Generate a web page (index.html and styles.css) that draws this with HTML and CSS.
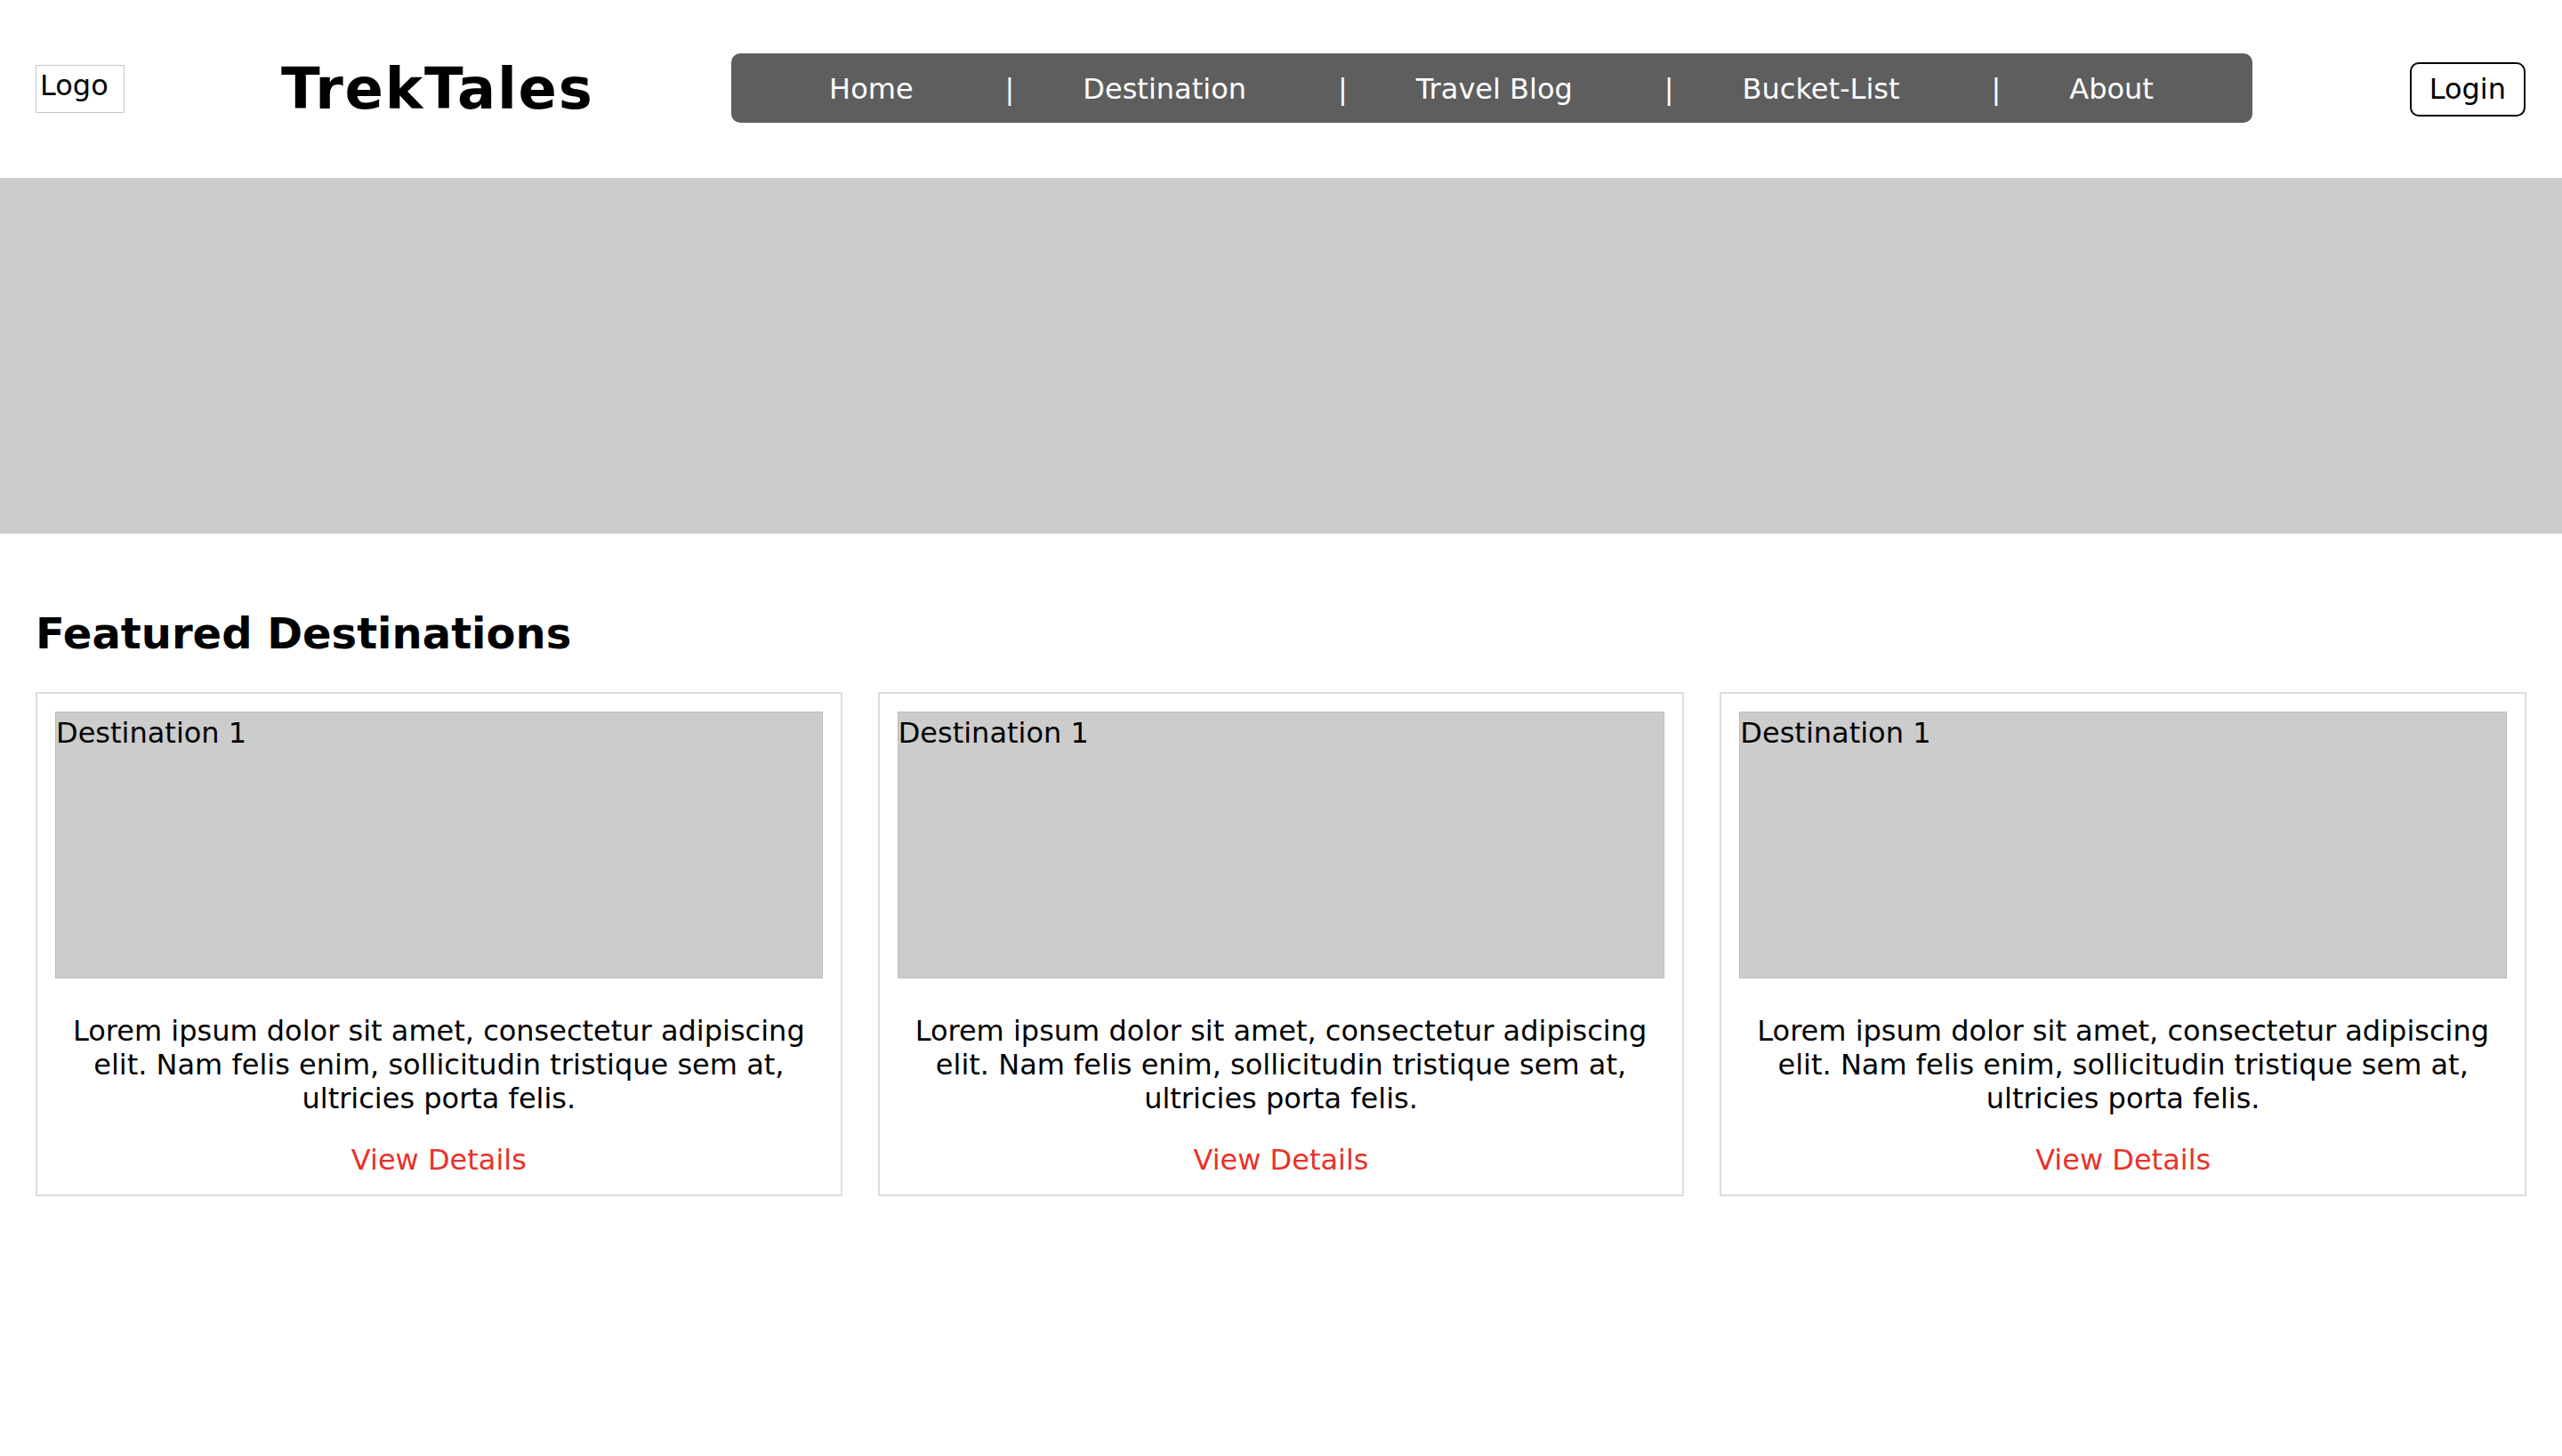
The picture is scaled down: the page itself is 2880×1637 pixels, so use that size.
FILE: index.html
```html
<!DOCTYPE html>
<html lang="en">
<head>
<meta charset="utf-8">
<title>TrekTales</title>
<link rel="stylesheet" href="styles.css">
</head>
<body>
<header class="site-header">
  <div class="logo">Logo</div>
  <h1 class="brand">TrekTales</h1>
  <nav class="main-nav">
    <a href="#">Home</a><span class="sep">|</span>
    <a href="#">Destination</a><span class="sep">|</span>
    <a href="#">Travel Blog</a><span class="sep">|</span>
    <a href="#">Bucket-List</a><span class="sep">|</span>
    <a href="#">About</a>
  </nav>
  <button class="login">Login</button>
</header>
<div class="hero"></div>
<section class="featured">
  <h2>Featured Destinations</h2>
  <div class="cards">
    <div class="card">
      <div class="card-img">Destination 1</div>
      <p>Lorem ipsum dolor sit amet, consectetur adipiscing elit. Nam felis enim, sollicitudin tristique sem at, ultricies porta felis.</p>
      <a href="#" class="details">View Details</a>
    </div>
    <div class="card">
      <div class="card-img">Destination 1</div>
      <p>Lorem ipsum dolor sit amet, consectetur adipiscing elit. Nam felis enim, sollicitudin tristique sem at, ultricies porta felis.</p>
      <a href="#" class="details">View Details</a>
    </div>
    <div class="card">
      <div class="card-img">Destination 1</div>
      <p>Lorem ipsum dolor sit amet, consectetur adipiscing elit. Nam felis enim, sollicitudin tristique sem at, ultricies porta felis.</p>
      <a href="#" class="details">View Details</a>
    </div>
  </div>
</section>
</body>
</html>
```
FILE: styles.css
```css
* { box-sizing: border-box; }
html, body { margin: 0; padding: 0; background: #fff; }
body {
  font-family: "DejaVu Sans", Verdana, sans-serif;
  font-size: 32px;
  color: #000;
}
.site-header {
  display: flex;
  align-items: center;
  height: 200px;
  padding: 0 41px 0 40px;
}
.logo {
  width: 100px;
  height: 54px;
  border: 1px solid #c4c4c4;
  padding: 3px 0 0 4px;
  font-size: 32px;
  line-height: normal;
  flex: none;
}
.brand {
  margin: 0 0 0 176px;
  font-size: 64px;
  font-weight: bold;
  letter-spacing: 1.7px;
  line-height: normal;
  flex: none;
}
.main-nav {
  margin-left: 154px;
  width: 1710px;
  height: 78px;
  margin-top: -2px;
  flex: none;
  background: #5e5e5e;
  border-radius: 10px;
  display: flex;
  justify-content: center;
  align-items: center;
  padding-top: 2px;
  color: #fff;
}
.main-nav a {
  color: #fff;
  text-decoration: none;
  white-space: nowrap;
}
.main-nav .sep {
  margin: 0 77px 0 103px;
}
.login {
  margin-left: auto;
  height: 61px;
  padding: 0 20px;
  border: 2px solid #000;
  border-radius: 10px;
  background: #fff;
  font-family: "DejaVu Sans", Verdana, sans-serif;
  font-size: 32px;
  color: #000;
}
.hero {
  height: 400px;
  background: #ccc;
}
.featured {
  padding: 84px 40px 0;
}
.featured h2 {
  margin: 0 0 38px;
  font-size: 48px;
  font-weight: bold;
  line-height: normal;
}
.cards {
  display: grid;
  grid-template-columns: repeat(3, 1fr);
  gap: 40px;
}
.card {
  border: 2px solid #ddd;
  padding: 20px 20px 20px;
  text-align: center;
}
.card-img {
  height: 300px;
  background: #ccc;
  border: 1px solid #bbb;
  padding: 4px 0 0 0;
  text-align: left;
}
.card p {
  margin: 40px 0 31px;
  line-height: normal;
}
.details {
  display: block;
  color: #e8322a;
  text-decoration: none;
}
```
